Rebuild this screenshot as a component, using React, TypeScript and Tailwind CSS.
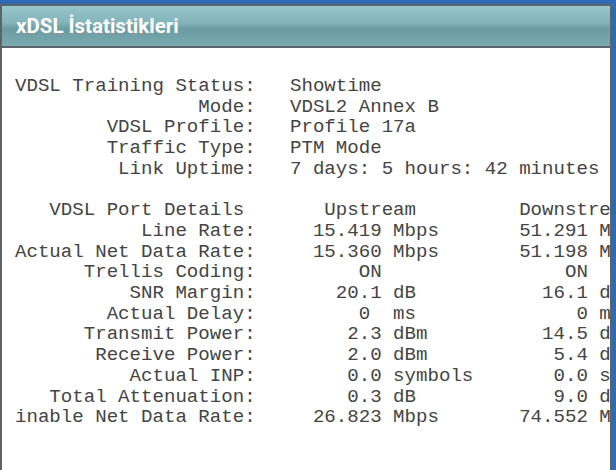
const lines = [
  "VDSL Training Status:   Showtime",
  "                Mode:   VDSL2 Annex B",
  "        VDSL Profile:   Profile 17a",
  "        Traffic Type:   PTM Mode",
  "         Link Uptime:   7 days: 5 hours: 42 minutes",
  "",
  "   VDSL Port Details       Upstream         Downstream",
  "           Line Rate:     15.419 Mbps       51.291 Mbps",
  "Actual Net Data Rate:     15.360 Mbps       51.198 Mbps",
  "      Trellis Coding:         ON                ON",
  "          SNR Margin:       20.1 dB           16.1 dB",
  "        Actual Delay:         0  ms              0 ms",
  "      Transmit Power:        2.3 dBm          14.5 dBm",
  "       Receive Power:        2.0 dBm           5.4 dBm",
  "          Actual INP:        0.0 symbols       0.0 symbols",
  "   Total Attenuation:        0.3 dB            9.0 dB",
  "inable Net Data Rate:     26.823 Mbps       74.552 Mbps",
];

export default function App() {
  return (
    <div className="h-[470px] w-[616px] overflow-hidden bg-[#2d6cb4] pr-[4px] pt-[4px]">
      <div className="flex h-[480px] flex-col border-2 border-[#5e6466] bg-white">
        <div className="flex h-[42px] shrink-0 items-center border-b-2 border-[#5e6466] bg-[linear-gradient(to_bottom,#97c6cc_0%,#84b5bb_40%,#6b9ca2_58%,#79abb0_100%)] pl-[14px]">
          <span className="font-['Roboto'] text-[20.5px] font-bold text-white">
            xDSL İstatistikleri
          </span>
        </div>
        <pre className="overflow-hidden whitespace-pre pl-[13px] pt-[28px] font-['Liberation_Mono',monospace] text-[19.1px] leading-[20.7px] text-[#444]">
          {lines.join("\n")}
        </pre>
      </div>
    </div>
  );
}
